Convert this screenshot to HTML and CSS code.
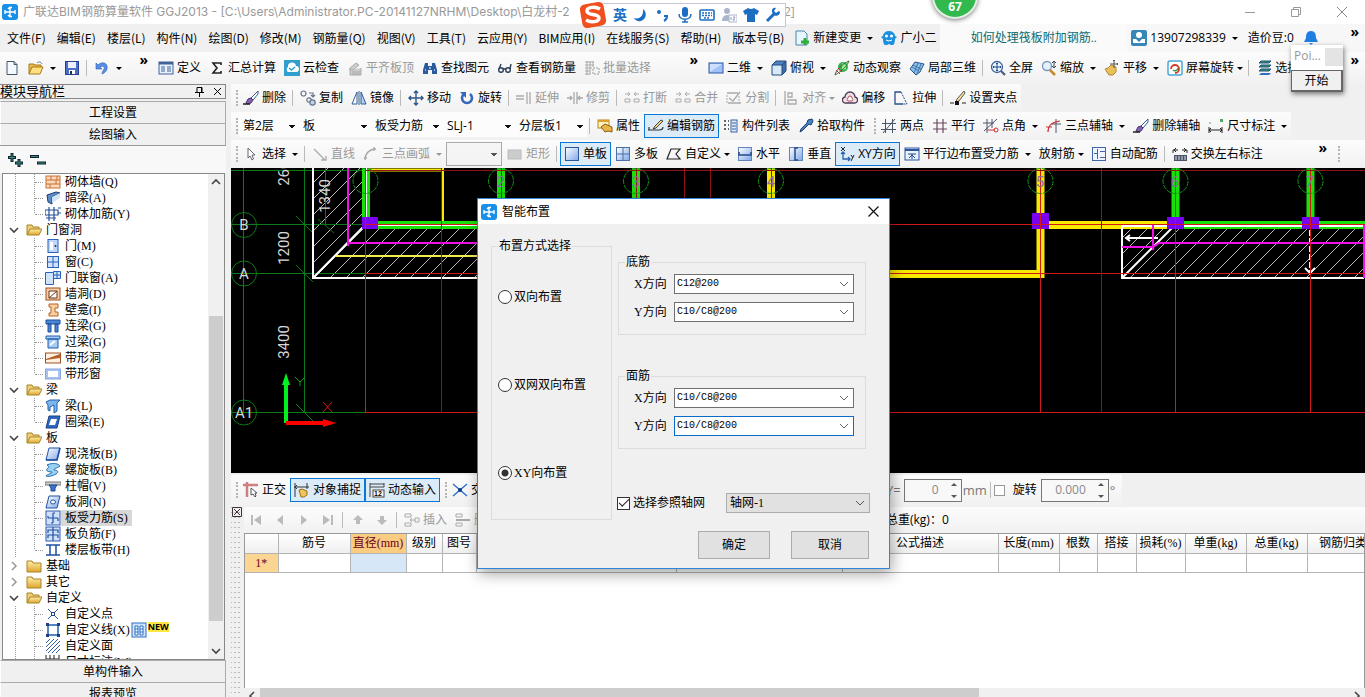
FILE: index.html
```html
<!DOCTYPE html>
<html lang="zh-CN">
<head>
  <meta charset="UTF-8" />
  <meta name="viewport" content="width=device-width, initial-scale=1" />
  <title>广联达BIM钢筋算量软件 GGJ2013</title>
  <link rel="stylesheet" href="styles.css">
</head>
<body>

<!-- icon sprite -->
<svg class="sprite" width="0" height="0">
  <defs>
    <linearGradient id="gBlue" x1="0" y1="0" x2="1" y2="1"><stop offset="0" stop-color="#fff"/><stop offset="1" stop-color="#7fa8e8"/></linearGradient>
    <linearGradient id="gGold" x1="0" y1="0" x2="0" y2="1"><stop offset="0" stop-color="#fff0a8"/><stop offset="1" stop-color="#dfa52c"/></linearGradient>
    <pattern id="hatch" width="16" height="16" patternUnits="userSpaceOnUse"><path d="M-1 17L17 -1" stroke="#bbb" stroke-width="1"/></pattern>
  </defs>
  <symbol id="i-app" viewBox="0 0 16 16"><rect width="16" height="16" rx="3" fill="#1a8fe8"/><path d="M10 3.500H8v9h2M3 8h10M3 6v4M13 6v4M6 5l2-2M6 11l2 2" stroke="#fff" stroke-width="1.400" fill="none"/></symbol>
  <symbol id="i-new" viewBox="0 0 16 16"><path d="M3 1.500h7l3 3v10H3z" fill="#f4f8ff" stroke="#456"/><path d="M10 1.500v3h3" fill="none" stroke="#456"/></symbol>
  <symbol id="i-open" viewBox="0 0 16 16"><path d="M1 14V4h5l1 1h6v2" fill="#e9b84a" stroke="#a87a1c"/><path d="M1 14l3-7h11l-3 7z" fill="#ffdf80" stroke="#a87a1c"/><path d="M9 3c2-2 4-1 5 1" stroke="#579" fill="none"/></symbol>
  <symbol id="i-save" viewBox="0 0 16 16"><rect x="1.500" y="1.500" width="13" height="13" fill="#4a6fc8" stroke="#283f8f"/><rect x="4" y="2" width="8" height="6" fill="#eef"/><rect x="5" y="10" width="6" height="4" fill="#fff"/><rect x="6" y="11" width="2" height="3" fill="#234"/></symbol>
  <symbol id="i-undo" viewBox="0 0 16 16"><path d="M2 3v6h6L6 7c3-2 5 0 4 2s-2 3-2 5c3-1 6-4 5-8S7 2 4 5z" fill="#5b8ee6" stroke="#2d5cb8" stroke-width=".6"/></symbol>
  <symbol id="i-define" viewBox="0 0 16 16"><rect x="1" y="2" width="14" height="12" fill="#eaf2ff" stroke="#3f6395"/><rect x="1" y="2" width="14" height="2.500" fill="#3f6395"/><path d="M3 7h4M3 9h4M3 11h4M9 7h4M9 9h4M9 11h4" stroke="#3f6395"/></symbol>
  <symbol id="i-sum" viewBox="0 0 16 16"><path d="M12 5V3H4l4 5-4 5h8v-2" fill="none" stroke="#222" stroke-width="1.600"/></symbol>
  <symbol id="i-cloud" viewBox="0 0 16 16"><rect width="16" height="16" fill="#2f9fd0"/><path d="M4 12a3 3 0 0 1 0-5 4 4 0 0 1 8-1 3 3 0 0 1 0 6z" fill="#fff"/><path d="M5 8l2.500 2L11 7" fill="none" stroke="#2f9fd0" stroke-width="1.500"/></symbol>
  <symbol id="i-align-top" viewBox="0 0 16 16"><path d="M2 9l7-6 3 2-6 5zM3 10v5h11V8M5 12h8M5 14h8" fill="#ccc" stroke="#aaa"/></symbol>
  <symbol id="i-find" viewBox="0 0 16 16"><path d="M3 3h3v3h4V3h3l2 7v4h-5v-4H6v4H1v-4z" fill="#285a9c"/><path d="M3 10h1M12 10h1M7 8h2" stroke="#bcdcff" stroke-width="1.500"/></symbol>
  <symbol id="i-glasses" viewBox="0 0 16 16"><g fill="none" stroke="#2b3f57" stroke-width="1.400"><circle cx="4" cy="10" r="2.300"/><circle cx="11" cy="10" r="2.300"/><path d="M6 9h3M2 9l2-5M13 9l1-5"/></g></symbol>
  <symbol id="i-batch" viewBox="0 0 16 16"><path d="M1 2h9M1 5h9M1 8h7M1 11h5M1 14h5M3 1v14M6 1v14M9 1v6" stroke="#aaa"/><path d="M9 8h6v6H9z" fill="none" stroke="#999" stroke-dasharray="2 1"/></symbol>
  <symbol id="i-rect" viewBox="0 0 16 16"><rect x="1" y="3" width="14" height="10" fill="#9fc0f8" stroke="#2e58a8"/><path d="M2 12V4h12z" fill="#cfe0ff"/></symbol>
  <symbol id="i-rect-off" viewBox="0 0 16 16"><rect x="1" y="4" width="13" height="9" fill="#ccc" stroke="#bbb"/></symbol>
  <symbol id="i-cube" viewBox="0 0 16 16"><path d="M1 5l4-4h10l-4 4z" fill="#4d82bf"/><path d="M1 5h10v10H1z" fill="#d7e8f9"/><path d="M11 5l4-4v10l-4 4z" fill="#3e6ea8"/><path d="M1 5h10v10H1zM1 5l4-4h10v10l-4 4M11 5l4-4" fill="none" stroke="#234b7c"/></symbol>
  <symbol id="i-orbit" viewBox="0 0 16 16"><circle cx="9" cy="7" r="5" fill="#37b24a"/><path d="M8 3l4 2v4l-4 1z" fill="#a3e6a0"/><path d="M1 15c1-5 6-10 14-14-2 5-7 10-14 14z" fill="none" stroke="#2b6e2f"/><path d="M2 10l4 4M4 8l4 4" stroke="#c33"/></symbol>
  <symbol id="i-local3d" viewBox="0 0 16 16"><path d="M1 9l5-7 9 2-4 8-4 3z" fill="#8ec0e6" stroke="#235a93"/><path d="M4 5l8 4M3 7l7 4M9 3L5 13M12 4L8 14" stroke="#235a93" stroke-width=".7"/></symbol>
  <symbol id="i-full" viewBox="0 0 16 16"><circle cx="7" cy="7" r="5.500" fill="#eaf4ff" stroke="#3a5f96" stroke-width="1.300"/><path d="M7 3v8M3 7h8M6 4l1-1 1 1M6 10l1 1 1-1M4 6L3 7l1 1M10 6l1 1-1 1" stroke="#1e4a8c" fill="none"/><path d="M11 11l4 4" stroke="#4a5b7a" stroke-width="2.200"/></symbol>
  <symbol id="i-zoom" viewBox="0 0 16 16"><circle cx="6" cy="6" r="4.500" fill="#e4f1ff" stroke="#7e97b8" stroke-width="1.300"/><path d="M9 10l5 5" stroke="#c9882e" stroke-width="2.500"/><path d="M13 1v7M11 3l2-2 2 2M11 6l2 2 2-2" stroke="#345" fill="none"/></symbol>
  <symbol id="i-hand" viewBox="0 0 16 16"><path d="M1 9l3-1 3-3 5 2v5l-3 3H5z" fill="#eac05a" stroke="#b3862a"/><path d="M10 0v8M6 4h8M9 1l1-1 1 1M13 3l1 1-1 1" stroke="#555" fill="none"/></symbol>
  <symbol id="i-spin" viewBox="0 0 16 16"><rect x="1" y="1" width="14" height="14" rx="2" fill="#fff" stroke="#48a8dc" stroke-width="1.500"/><path d="M4 9a4 4 0 1 1 4 4" fill="none" stroke="#d43a2c" stroke-width="1.800"/><path d="M11 8a3 3 0 0 1-5 2" fill="none" stroke="#3b9b3b" stroke-width="1.500"/></symbol>
  <symbol id="i-floors" viewBox="0 0 16 16"><path d="M3 3l2-2h10l-2 2zM3 7l2-2h10l-2 2zM3 11l2-2h10l-2 2z" fill="#3e9d4b" stroke="#1b4f8a"/><path d="M3 15l2-2h10l-2 2z" fill="#2f6fc0"/></symbol>

  <symbol id="i-brush" viewBox="0 0 16 16"><path d="M15 1L8 8l2 2 5-6z" fill="#fff" stroke="#345c94"/><path d="M8 8l2 2-2 3-4 1-1-1 2-4z" fill="#8a62b5" stroke="#43306b"/><path d="M0 14h7" stroke="#222" stroke-width="1.500"/></symbol>
  <symbol id="i-copy" viewBox="0 0 16 16"><g fill="none" stroke="#66758c" stroke-width="1.200"><circle cx="3.500" cy="3.500" r="2.500"/><circle cx="9" cy="10" r="2.200"/><circle cx="12.500" cy="12.500" r="2.700" fill="#bcd3ee"/><path d="M9 3h4v4M11 5l2 2 2-2"/></g></symbol>
  <symbol id="i-mirror" viewBox="0 0 16 16"><path d="M6 2v12H1z" fill="#fff" stroke="#2f5c96"/><path d="M10 2v12h5z" fill="#b6d1f0" stroke="#2f5c96"/><path d="M8 1v14" stroke="#2f5c96"/></symbol>
  <symbol id="i-move" viewBox="0 0 16 16"><path d="M8 1v14M1 8h14M6 3l2-2 2 2M6 13l2 2 2-2M3 6L1 8l2 2M13 6l2 2-2 2" fill="none" stroke="#2f5687" stroke-width="1.400"/></symbol>
  <symbol id="i-rotate" viewBox="0 0 16 16"><path d="M5 4a5 5 0 1 0 6 0" fill="none" stroke="#3568b8" stroke-width="2.600"/><path d="M1 2h6v6z" fill="#3568b8"/></symbol>
  <symbol id="i-extend" viewBox="0 0 16 16"><path d="M0 6h8M0 9h8M11 2v12M14 2v12" stroke="#aaa" stroke-width="1.300"/></symbol>
  <symbol id="i-trim" viewBox="0 0 16 16"><path d="M0 8h5M11 8h5M7 2v12M10 2v12M3 6l2 2-2 2M13 6l-2 2 2 2" fill="none" stroke="#aaa" stroke-width="1.300"/></symbol>
  <symbol id="i-break" viewBox="0 0 16 16"><path d="M1 4h5M10 4h5M4 2l2 2-2 2M12 2l-2 2 2 2M1 9h5v3H1zM10 9h5v3h-5z" fill="none" stroke="#aaa"/></symbol>
  <symbol id="i-split" viewBox="0 0 16 16"><path d="M1 3h11M2 13h13M3 8l4 3 7-9" fill="none" stroke="#aaa" stroke-width="1.300"/><path d="M1 5v8M13 6v7" stroke="#aaa" stroke-dasharray="2 1"/></symbol>
  <symbol id="i-align" viewBox="0 0 16 16"><path d="M2 1v14M5 3h4v4H5zM5 10h8v4H5z" fill="none" stroke="#aaa" stroke-width="1.300"/></symbol>
  <symbol id="i-offset" viewBox="0 0 16 16"><path d="M4 13a3 3 0 0 1-1-6 5 5 0 0 1 10 0 3 3 0 0 1-1 6z" fill="#f1dfe3" stroke="#4a3d5a" stroke-width="1.300"/><path d="M6 11a2 2 0 0 1 0-3 2 2 0 0 1 4 0 2 2 0 0 1 0 3z" fill="#fff" stroke="#b44a5c"/></symbol>
  <symbol id="i-stretch" viewBox="0 0 16 16"><path d="M8 2H2v12h8" fill="none" stroke="#2b4f8d" stroke-width="1.300"/><path d="M8 2l6 12h-4" fill="none" stroke="#2b4f8d" stroke-dasharray="2 1"/></symbol>
  <symbol id="i-grip-pt" viewBox="0 0 16 16"><path d="M0 13h4M12 13h4" stroke="#222"/><path d="M14 1L7 9l-1 3 3-1 6-8z" fill="#f6e2a0" stroke="#555"/><rect x="5" y="11" width="4" height="4" fill="#111"/></symbol>

  <symbol id="i-prop" viewBox="0 0 16 16"><rect x="1" y="2" width="11" height="8" fill="#fff3c4" stroke="#b98519"/><path d="M1 3h11" stroke="#d9a02c" stroke-width="2"/><path d="M4 9l4-3 7 3v5l-4-1-3 1z" fill="#e9b548" stroke="#8a5c10"/></symbol>
  <symbol id="i-editbar" viewBox="0 0 16 16"><path d="M0 12h11c3 0 4-1 4-3M1 9v3" fill="none" stroke="#333" stroke-width="1.200"/><path d="M13 2L7 8l-2 3 3-1 7-7z" fill="#f4d58a" stroke="#444"/></symbol>
  <symbol id="i-list" viewBox="0 0 16 16"><path d="M1 3h2M1 7h2M1 11h2M5 3h1M5 7h1M5 11h1" stroke="#333" stroke-width="1.500"/><rect x="8" y="2" width="6" height="12" fill="#dfeaff" stroke="#3d629e"/><path d="M9 5h4M9 8h4M9 11h4" stroke="#3d629e"/></symbol>
  <symbol id="i-pick" viewBox="0 0 16 16"><path d="M10 2l4-1 1 2-2 4-2-1-6 6-3 2 1-3 6-6z" fill="#4a85c8" stroke="#173d73"/></symbol>
  <symbol id="i-ax2" viewBox="0 0 16 16"><path d="M4.500 1v14M11.500 1v14M0 11.500h15M1 5.500h14M2 15L14 1" stroke="#465567"/></symbol>
  <symbol id="i-axpar" viewBox="0 0 16 16"><path d="M5 1v14M11 1v14M1 5h14M1 11h14" stroke="#6c4a63" stroke-width="1.200"/></symbol>
  <symbol id="i-axang" viewBox="0 0 16 16"><path d="M4 1v14M9 1v9M0 5h11M1 13L14 1" stroke="#4c5770"/><path d="M4 12h8" stroke="#c33"/><circle cx="13" cy="12" r="2" fill="none" stroke="#c33"/></symbol>
  <symbol id="i-ax3" viewBox="0 0 16 16"><path d="M10 1v14M6 6h9" stroke="#4c5770"/><path d="M2 14c0-6 3-10 12-11M0 9h6" fill="none" stroke="#c33" stroke-width="1.200"/></symbol>
  <symbol id="i-dim" viewBox="0 0 16 16"><path d="M1 9v6M14 9v6M1 12h13M3 10l-2 2 2 2M12 10l2 2-2 2" fill="none" stroke="#222"/><path d="M12 1h3v3h-3z" fill="#53a866"/><path d="M1 5h2" stroke="#53a866"/></symbol>

  <symbol id="i-cursor" viewBox="0 0 16 16"><path d="M5 2v10l2-2 2 4 1.500-1L9 9h3z" fill="#fff" stroke="#667"/></symbol>
  <symbol id="i-line" viewBox="0 0 16 16"><path d="M2 3l11 11M9 14h5v-4" fill="none" stroke="#aaa" stroke-width="1.300"/></symbol>
  <symbol id="i-arc" viewBox="0 0 16 16"><path d="M2 14C2 7 7 3 13 3" fill="none" stroke="#aaa" stroke-width="1.500"/><path d="M1 12h3M11 1v4" stroke="#aaa" stroke-width="1.300"/></symbol>
  <symbol id="i-slab" viewBox="0 0 16 16"><rect x="1.500" y="1.500" width="13" height="13" fill="url(#gBlue)" stroke="#2c559c"/></symbol>
  <symbol id="i-slabs" viewBox="0 0 16 16"><rect x="1.500" y="1.500" width="13" height="13" fill="url(#gBlue)" stroke="#4b6fa8"/><path d="M8 1v14M1 8h14" stroke="#4b6fa8"/></symbol>
  <symbol id="i-poly" viewBox="0 0 16 16"><path d="M5 3h9l-4 5 4 5H1z" fill="none" stroke="#222" stroke-width="1.200"/></symbol>
  <symbol id="i-horiz" viewBox="0 0 16 16"><rect x="1.500" y="1.500" width="13" height="13" fill="url(#gBlue)" stroke="#6384b8"/><path d="M2 6v3h12V6" fill="none" stroke="#24498a" stroke-width="1.500"/></symbol>
  <symbol id="i-vert" viewBox="0 0 16 16"><rect x="1.500" y="1.500" width="13" height="13" fill="url(#gBlue)" stroke="#6384b8"/><path d="M10 2H7v12h3" fill="none" stroke="#24498a" stroke-width="1.500"/></symbol>
  <symbol id="i-xy" viewBox="0 0 16 16"><path d="M4 6v7h7M2 8l2-2 2 2M9 11l2 2-2 2" fill="none" stroke="#2b62a8" stroke-width="1.300"/><path d="M2 1l4 4M6 1L2 5M12 9l2 3M15 9l-3 6" stroke="#222"/></symbol>
  <symbol id="i-edge" viewBox="0 0 16 16"><rect x="1" y="2" width="14" height="12" fill="#e8f1ff" stroke="#2c559c"/><path d="M1 4h14" stroke="#2c559c" stroke-width="2"/><path d="M4 8h8M8 8v5M5 12l3-3 3 3" fill="none" stroke="#24498a"/></symbol>
  <symbol id="i-auto" viewBox="0 0 16 16"><rect x="1.500" y="1.500" width="13" height="13" fill="#f0f5ff" stroke="#4065a8"/><path d="M6.500 3v10M3 7.500h4M9 5.500h5M9 11.500h5" stroke="#4065a8"/></symbol>
  <symbol id="i-swap" viewBox="0 0 16 16"><rect x="2" y="9" width="13" height="6" fill="#4a5568"/><path d="M4 10v4M7 10v4M10 10v4M13 10v4" stroke="#dde"/><path d="M1 7V4h5M15 7V4h-5M4 2L2 4l2 2M12 2l2 2-2 2" stroke="#222" fill="none"/></symbol>

  <symbol id="i-ortho" viewBox="0 0 16 16"><path d="M0 3h15M4 0v15" stroke="#cf7f7f" stroke-width="2.500"/><path d="M8 6v7l2-1 2 3 1-1-1-3h2z" fill="#fff" stroke="#556"/></symbol>
  <symbol id="i-snap" viewBox="0 0 16 16"><path d="M1 1v14M0 5h15M13 1v6M3 3L1 5l2 2" stroke="#333" fill="none"/><path d="M5 8l3-1 5 2v4l-3 2H7z" fill="#f2c55a" stroke="#9a6d17"/></symbol>
  <symbol id="i-dyn" viewBox="0 0 16 16"><path d="M1 1v14M15 1v4M1 2h14M1 5h14" stroke="#444"/><rect x="4" y="8" width="11" height="7" fill="#fff" stroke="#444"/><text x="5" y="14" font-size="7" font-weight="bold" font-family="Liberation Sans">12</text></symbol>
  <symbol id="i-cross" viewBox="0 0 16 16"><path d="M1 2l14 12M15 2L1 14" stroke="#2a6ad0" stroke-width="1.300"/><circle cx="8" cy="8" r="2" fill="#123a7c"/></symbol>
  <symbol id="i-first" viewBox="0 0 16 16"><path d="M4 3v10" stroke="#bbb" stroke-width="2"/><path d="M13 3v10L6 8z" fill="#bbb"/></symbol>
  <symbol id="i-prev" viewBox="0 0 16 16"><path d="M11 3v10L5 8z" fill="#bbb"/></symbol>
  <symbol id="i-next" viewBox="0 0 16 16"><path d="M5 3v10l6-5z" fill="#bbb"/></symbol>
  <symbol id="i-last" viewBox="0 0 16 16"><path d="M12 3v10" stroke="#bbb" stroke-width="2"/><path d="M3 3v10l7-5z" fill="#bbb"/></symbol>
  <symbol id="i-up" viewBox="0 0 16 16"><path d="M8 3l5 5h-3v4H6V8H3z" fill="#bbb"/></symbol>
  <symbol id="i-down" viewBox="0 0 16 16"><path d="M8 13l5-5h-3V4H6v4H3z" fill="#bbb"/></symbol>
  <symbol id="i-ins" viewBox="0 0 16 16"><path d="M1 2h6v3H1zM1 11h6v3H1zM11 6h4v4h-4zM11 8H6M8 6L6 8l2 2" fill="none" stroke="#aaa"/></symbol>
  <symbol id="i-del" viewBox="0 0 16 16"><path d="M1 2h6v3H1zM1 11h6v3H1z" fill="none" stroke="#aaa"/><path d="M1 8h14" stroke="#aaa" stroke-width="2"/></symbol>

  <symbol id="i-doc-add" viewBox="0 0 16 16"><path d="M2 1h8l3 3v11H2z" fill="#eaf6ff" stroke="#4b86a8"/><path d="M11 8v7M7 12h8" stroke="#2eae3a" stroke-width="3"/></symbol>
  <symbol id="i-mascot" viewBox="0 0 16 16"><path d="M2 6a6 5 0 0 1 12 0l2 1-2 2c0 3-1 6-2 6h-2l-2-1-2 1H4c-1 0-2-3-2-6L0 7z" fill="#1b8fe0"/><circle cx="5.500" cy="6" r="1.500" fill="#fff"/><circle cx="10.500" cy="6" r="1.500" fill="#fff"/><path d="M5 10q3 2 6 0" stroke="#fff" fill="none"/></symbol>
  <symbol id="i-user" viewBox="0 0 16 16"><rect width="16" height="16" rx="2" fill="#3886b8"/><circle cx="8" cy="5" r="3" fill="#fff"/><path d="M2 13V9h3l3 3 3-3h3v4z" fill="#fff"/></symbol>
  <symbol id="i-bell" viewBox="0 0 16 16"><path d="M8 1c4 0 5 3 5 7l2 4H1l2-4c0-4 1-7 5-7z" fill="#1e7fe0"/><path d="M6 13h4l-2 2z" fill="#1e7fe0"/></symbol>

  <symbol id="t-folder" viewBox="0 0 16 16"><path d="M1 3h5l1 2h8v9H1z" fill="url(#gGold)" stroke="#a8842c"/></symbol>
  <symbol id="t-folder-open" viewBox="0 0 16 16"><path d="M1 13V3h5l1 2h6v2" fill="#f0cc70" stroke="#a8842c"/><path d="M1 13l3-6h12l-3 6z" fill="url(#gGold)" stroke="#a8842c"/></symbol>
  <symbol id="t-open" viewBox="0 0 12 12"><path d="M2 4l4 4 4-4" fill="none" stroke="#444" stroke-width="1.600"/></symbol>
  <symbol id="t-shut" viewBox="0 0 12 12"><path d="M4 2l4 4-4 4" fill="none" stroke="#999" stroke-width="1.500"/></symbol>
  <symbol id="t-brick" viewBox="0 0 16 16"><rect x="1" y="2" width="14" height="12" fill="#fbd9b8" stroke="#c86f35"/><path d="M1 6h14M1 10h14M6 2v4M11 6v4M5 10v4M12 2v4" stroke="#c86f35"/></symbol>
  <symbol id="t-beam" viewBox="0 0 16 16"><path d="M2 5l9-3 4 1-8 4v7l-4-2z" fill="#5b8cc6" stroke="#1d3f75"/><path d="M7 7l8-4v5l-8 5z" fill="#cfe2f8"/></symbol>
  <symbol id="t-rebar" viewBox="0 0 16 16"><path d="M0 4h13v5H0zM4 1v14M9 1v14M1 12h10M13 2h3M13 7h3" fill="none" stroke="#22509a" stroke-width="1.200"/></symbol>
  <symbol id="t-door" viewBox="0 0 16 16"><rect x="3" y="1.500" width="10" height="13" fill="#bcd6ff" stroke="#2962b8"/><path d="M5 4h3v8H5z" fill="#fff"/><circle cx="10.500" cy="8" r="1" fill="#234"/></symbol>
  <symbol id="t-window" viewBox="0 0 16 16"><rect x="2.500" y="2.500" width="11" height="11" fill="#cfe3ff" stroke="#2962b8"/><path d="M8 3v10M3 8h10" stroke="#2962b8"/></symbol>
  <symbol id="t-doorwin" viewBox="0 0 16 16"><path d="M.5 2.500h8v12h-8zM8.500 1.500h7v7h-7z" fill="#cfe3ff" stroke="#2962b8"/><path d="M12 2v6M9 5h6" stroke="#2962b8"/></symbol>
  <symbol id="t-hole" viewBox="0 0 16 16"><rect x="1" y="2" width="14" height="12" fill="#f7cfa8" stroke="#a04f20"/><path d="M4 5h8v7H4z" fill="#fff" stroke="#6d3517"/><path d="M4 12l8-7" stroke="#6d3517"/></symbol>
  <symbol id="t-niche" viewBox="0 0 16 16"><path d="M4 2h9v4h-3v4h3v4H4v-3h2V5H4z" fill="#fbd0a0" stroke="#b8602a"/></symbol>
  <symbol id="t-lianliang" viewBox="0 0 16 16"><path d="M1 2h14v4H1zM3 6h3v8H3zM10 6h3v8h-3z" fill="#4a86d6" stroke="#1f4f98"/></symbol>
  <symbol id="t-guoliang" viewBox="0 0 16 16"><path d="M1 2h14v3H1zM3 5h10v9H3z" fill="#a7cbf5" stroke="#1f5fae"/><path d="M5 11l5-4" stroke="#fff" stroke-width="2"/></symbol>
  <symbol id="t-strip" viewBox="0 0 16 16"><rect x=".5" y="3" width="15" height="10" fill="#fff2e2" stroke="#a04f20"/><path d="M1 9l14-5v4L1 10z" fill="#b8602a"/></symbol>
  <symbol id="t-stripwin" viewBox="0 0 16 16"><rect x=".5" y="3" width="15" height="10" fill="#a9c2f2" stroke="#87a4dc"/><rect x="3" y="5" width="10" height="6" fill="#fff"/></symbol>
  <symbol id="t-liang" viewBox="0 0 16 16"><path d="M1 4l4-2h10l-3 3v8l-3 2V7L5 9v4l-2-1V7z" fill="#7ab5ee" stroke="#1f5fae"/></symbol>
  <symbol id="t-quan" viewBox="0 0 16 16"><path d="M4 2h11l-3 12H1z" fill="#2e68c2" stroke="#173d84"/><path d="M6 5h6l-2 6H4z" fill="#fff"/></symbol>
  <symbol id="t-slab" viewBox="0 0 16 16"><path d="M4 2h11l-3 12H1z" fill="url(#gBlue)" stroke="#1f50a4"/><path d="M1 14h11l3-12" fill="none" stroke="#1f50a4" stroke-width="1.600"/></symbol>
  <symbol id="t-spiral" viewBox="0 0 16 16"><path d="M2 3c6-3 12-1 13 1-2 2-6 2-6 4 4 0 5 2 2 4s-8 3-10 2c1-2 6-2 6-4-5 0-7-2-4-4 1-1 1-2-1-3z" fill="#9bd0f5" stroke="#1f6fb4"/></symbol>
  <symbol id="t-cap" viewBox="0 0 16 16"><path d="M0 4h16v3H0z" fill="#ccc" stroke="#777"/><path d="M4 7h8l-2 3v3H6v-3z" fill="#3a74cc" stroke="#1d4a94"/></symbol>
  <symbol id="t-slabhole" viewBox="0 0 16 16"><path d="M4 2h11l-3 12H1z" fill="url(#gBlue)" stroke="#1f50a4"/><ellipse cx="8" cy="8" rx="2.500" ry="2" fill="#fff" stroke="#1f50a4"/></symbol>
  <symbol id="t-force" viewBox="0 0 16 16"><rect x="1" y="1" width="14" height="14" fill="#cfe0fb" stroke="#2f5fae"/><path d="M8 3v10M3 8h10M3 8V6M13 8v3M8 3h2M8 13H6" fill="none" stroke="#1f50a4" stroke-width="1.200"/></symbol>
  <symbol id="t-neg" viewBox="0 0 16 16"><rect x="1" y="1" width="14" height="14" fill="#cfe0fb" stroke="#2f5fae"/><path d="M3 7V4h10v3M3 12V9h10v3M8 1v14" fill="none" stroke="#1f50a4" stroke-width="1.200"/></symbol>
  <symbol id="t-band" viewBox="0 0 16 16"><path d="M1 3h14M1 13h14M5 3v10M11 3v10" stroke="#1f50a4" stroke-width="1.500"/></symbol>
  <symbol id="t-pt" viewBox="0 0 16 16"><path d="M3 3l10 10M13 3L3 13" stroke="#2f5fae"/><rect x="6.500" y="6.500" width="3" height="3" fill="#fff" stroke="#1f3f84"/></symbol>
  <symbol id="t-ln" viewBox="0 0 16 16"><rect x="3" y="3" width="10" height="10" fill="none" stroke="#1f5fae" stroke-width="1.500"/><path d="M1 1h3v3H1zM12 1h3v3h-3zM1 12h3v3H1zM12 12h3v3h-3z" fill="#1f3f84"/></symbol>
  <symbol id="t-face" viewBox="0 0 16 16"><path d="M1 5l4-4M1 9l8-8M1 13L13 1M3 15L15 3M7 15l8-8M11 15l4-4" stroke="#2f5fae"/></symbol>
  <symbol id="t-ruler" viewBox="0 0 16 16"><path d="M1 1v14M5 1v5M9 1v5M14 1v14M1 5h13" stroke="#222"/></symbol>
  <symbol id="t-book" viewBox="0 0 16 16"><rect x="1" y="1" width="14" height="14" fill="#cfe6ff" stroke="#2f6fc0"/><path d="M4 4h3v9H4zM9 4h3v9H9zM4 7h3M4 10h3M9 7h3M9 10h3" fill="#fff" stroke="#2f6fc0"/></symbol>
</svg>

<header class="titlebar">
  <svg class="ico"><use href="#i-app"/></svg>
  <span class="title-text">广联达BIM钢筋算量软件 GGJ2013 - [C:\Users\Administrator.PC-20141127NRHM\Desktop\白龙村-2</span>
  <span>2]</span>
  <div class="win-btns">
    <button aria-label="最小化"><svg width="10" height="10"><path d="M0 5.500h10" stroke="#999"/></svg></button>
    <button aria-label="还原"><svg width="10" height="10"><path d="M.5 2.500h7v7h-7zM2.500 2V.5h7v7H8" fill="none" stroke="#999"/></svg></button>
    <button aria-label="关闭"><svg width="10" height="10"><path d="M0 0l10 10M10 0L0 10" stroke="#888"/></svg></button>
  </div>
</header>

<nav class="menubar">
  <div class="menus"><button>文件(F)</button><button>编辑(E)</button><button>楼层(L)</button><button>构件(N)</button><button>绘图(D)</button><button>修改(M)</button><button>钢筋量(Q)</button><button>视图(V)</button><button>工具(T)</button><button>云应用(Y)</button><button>BIM应用(I)</button><button>在线服务(S)</button><button>帮助(H)</button><button>版本号(B)</button></div>
  <button class="tool"><svg class="ico"><use href="#i-doc-add"/></svg>新建变更<i class="caret wide"></i></button>
  <button class="tool"><svg class="ico"><use href="#i-mascot"/></svg>广小二</button>
  <div class="news"><a href="#">如何处理筏板附加钢筋..</a></div>
  <div class="account">
    <button class="tool"><svg class="ico"><use href="#i-user"/></svg>13907298339<i class="caret wide"></i></button>
    <span>造价豆:0</span>
    <svg class="ico bell"><use href="#i-bell"/></svg>
    <button class="more">»</button>
  </div>
</nav>

<div class="topbar">
  <div class="toolbar file-tools">
    <button class="tool" aria-label="新建"><svg class="ico"><use href="#i-new"/></svg></button>
    <button class="tool" aria-label="打开"><svg class="ico"><use href="#i-open"/></svg><i class="caret wide"></i></button>
    <button class="tool" aria-label="保存"><svg class="ico"><use href="#i-save"/></svg></button>
    <i class="sep"></i>
    <button class="tool" aria-label="撤销"><svg class="ico"><use href="#i-undo"/></svg><i class="caret wide"></i></button>
    <button class="more">»</button>
  </div>
  <div class="toolbar calc-tools">
    <button class="tool"><svg class="ico"><use href="#i-define"/></svg>定义</button>
    <button class="tool"><svg class="ico"><use href="#i-sum"/></svg>汇总计算</button>
    <button class="tool"><svg class="ico"><use href="#i-cloud"/></svg>云检查</button>
    <button class="tool" disabled><svg class="ico"><use href="#i-align-top"/></svg>平齐板顶</button>
    <button class="tool"><svg class="ico"><use href="#i-find"/></svg>查找图元</button>
    <button class="tool"><svg class="ico"><use href="#i-glasses"/></svg>查看钢筋量</button>
    <button class="tool" disabled><svg class="ico"><use href="#i-batch"/></svg>批量选择</button>
    <button class="more">»</button>
  </div>
  <div class="toolbar view-tools">
    <button class="tool"><svg class="ico"><use href="#i-rect"/></svg>二维<i class="caret wide"></i></button>
    <button class="tool"><svg class="ico"><use href="#i-cube"/></svg>俯视<i class="caret wide"></i></button>
    <button class="tool"><svg class="ico"><use href="#i-orbit"/></svg>动态观察</button>
    <button class="tool"><svg class="ico"><use href="#i-local3d"/></svg>局部三维</button>
    <i class="sep"></i>
    <button class="tool"><svg class="ico"><use href="#i-full"/></svg>全屏</button>
    <button class="tool"><svg class="ico"><use href="#i-zoom"/></svg>缩放<i class="caret wide"></i></button>
    <button class="tool"><svg class="ico"><use href="#i-hand"/></svg>平移<i class="caret wide"></i></button>
    <button class="tool"><svg class="ico"><use href="#i-spin"/></svg>屏幕旋转<i class="caret"></i></button>
    <i class="sep"></i>
    <button class="tool"><svg class="ico"><use href="#i-floors"/></svg>选择楼层</button>
    <button class="more">»</button>
  </div>
</div>

<div class="main">
  <aside class="nav">
    <div class="nav-head">模块导航栏
      <span class="nav-head-btns">
        <svg width="9" height="11"><path d="M2 1.500h5v5H2zM0 6.500h9M4.500 7v4M6.500 1v5" fill="none" stroke="#000"/></svg>
        <svg width="9" height="9"><path d="M1 1l7 7M8 1L1 8" stroke="#000"/></svg>
      </span>
    </div>
    <button class="nav-tab">工程设置</button>
    <button class="nav-tab">绘图输入</button>
    <div class="nav-tools">
      <svg width="16" height="16"><path d="M5 1v9M1 5.500h8M12 7v8M8 11h8" stroke="#123" stroke-width="3"/><path d="M5 2v7M2 5.500h6M12 8v6M9 11h6" stroke="#3a8a76"/></svg>
      <svg width="16" height="16"><path d="M0 4.500h9M7 11h9" stroke="#123" stroke-width="3"/><path d="M1 4.500h7M8 11h7" stroke="#3a8a76"/></svg>
    </div>
    <div class="tree-box">
      <div class="tree">
        <ul>
          <li><svg class="ico"><use href="#t-brick"/></svg>砌体墙(Q)</li>
          <li><svg class="ico"><use href="#t-beam"/></svg>暗梁(A)</li>
          <li><svg class="ico"><use href="#t-rebar"/></svg>砌体加筋(Y)</li>
        </ul>
        <div class="group"><svg class="chev"><use href="#t-open"/></svg><svg class="ico"><use href="#t-folder-open"/></svg>门窗洞</div>
        <ul>
          <li><svg class="ico"><use href="#t-door"/></svg>门(M)</li>
          <li><svg class="ico"><use href="#t-window"/></svg>窗(C)</li>
          <li><svg class="ico"><use href="#t-doorwin"/></svg>门联窗(A)</li>
          <li><svg class="ico"><use href="#t-hole"/></svg>墙洞(D)</li>
          <li><svg class="ico"><use href="#t-niche"/></svg>壁龛(I)</li>
          <li><svg class="ico"><use href="#t-lianliang"/></svg>连梁(G)</li>
          <li><svg class="ico"><use href="#t-guoliang"/></svg>过梁(G)</li>
          <li><svg class="ico"><use href="#t-strip"/></svg>带形洞</li>
          <li><svg class="ico"><use href="#t-stripwin"/></svg>带形窗</li>
        </ul>
        <div class="group"><svg class="chev"><use href="#t-open"/></svg><svg class="ico"><use href="#t-folder-open"/></svg>梁</div>
        <ul>
          <li><svg class="ico"><use href="#t-liang"/></svg>梁(L)</li>
          <li><svg class="ico"><use href="#t-quan"/></svg>圈梁(E)</li>
        </ul>
        <div class="group"><svg class="chev"><use href="#t-open"/></svg><svg class="ico"><use href="#t-folder-open"/></svg>板</div>
        <ul>
          <li><svg class="ico"><use href="#t-slab"/></svg>现浇板(B)</li>
          <li><svg class="ico"><use href="#t-spiral"/></svg>螺旋板(B)</li>
          <li><svg class="ico"><use href="#t-cap"/></svg>柱帽(V)</li>
          <li><svg class="ico"><use href="#t-slabhole"/></svg>板洞(N)</li>
          <li class="on"><svg class="ico"><use href="#t-force"/></svg><span>板受力筋(S)</span></li>
          <li><svg class="ico"><use href="#t-neg"/></svg>板负筋(F)</li>
          <li><svg class="ico"><use href="#t-band"/></svg>楼层板带(H)</li>
        </ul>
        <div class="group"><svg class="chev"><use href="#t-shut"/></svg><svg class="ico"><use href="#t-folder"/></svg>基础</div>
        <div class="group"><svg class="chev"><use href="#t-shut"/></svg><svg class="ico"><use href="#t-folder"/></svg>其它</div>
        <div class="group"><svg class="chev"><use href="#t-open"/></svg><svg class="ico"><use href="#t-folder-open"/></svg>自定义</div>
        <ul>
          <li><svg class="ico"><use href="#t-pt"/></svg>自定义点</li>
          <li><svg class="ico"><use href="#t-ln"/></svg>自定义线(X)<svg class="ico tight"><use href="#t-book"/></svg><b class="new">NEW</b></li>
          <li><svg class="ico"><use href="#t-face"/></svg>自定义面</li>
          <li><svg class="ico"><use href="#t-ruler"/></svg>尺寸标注(W)</li>
        </ul>
      </div>
      <div class="vscroll">
        <svg width="10" height="16"><path d="M1 10l4-4 4 4" fill="none" stroke="#444" stroke-width="1.600"/></svg>
        <i class="thumb"></i>
        <svg width="10" height="16"><path d="M1 6l4 4 4-4" fill="none" stroke="#444" stroke-width="1.600"/></svg>
      </div>
    </div>
    <button class="nav-tab">单构件输入</button>
    <button class="nav-tab">报表预览</button>
  </aside>

  <section class="work">
    <div class="toolbar">
      <i class="grip"></i>
      <button class="tool"><svg class="ico"><use href="#i-brush"/></svg>删除</button>
      <i class="sep"></i>
      <button class="tool"><svg class="ico"><use href="#i-copy"/></svg>复制</button>
      <button class="tool"><svg class="ico"><use href="#i-mirror"/></svg>镜像</button>
      <i class="sep"></i>
      <button class="tool"><svg class="ico"><use href="#i-move"/></svg>移动</button>
      <button class="tool"><svg class="ico"><use href="#i-rotate"/></svg>旋转</button>
      <i class="sep"></i>
      <button class="tool" disabled><svg class="ico"><use href="#i-extend"/></svg>延伸</button>
      <button class="tool" disabled><svg class="ico"><use href="#i-trim"/></svg>修剪</button>
      <i class="sep"></i>
      <button class="tool" disabled><svg class="ico"><use href="#i-break"/></svg>打断</button>
      <button class="tool" disabled><svg class="ico"><use href="#i-break"/></svg>合并</button>
      <button class="tool" disabled><svg class="ico"><use href="#i-split"/></svg>分割</button>
      <i class="sep"></i>
      <button class="tool" disabled><svg class="ico"><use href="#i-align"/></svg>对齐<i class="caret"></i></button>
      <button class="tool"><svg class="ico"><use href="#i-offset"/></svg>偏移</button>
      <button class="tool"><svg class="ico"><use href="#i-stretch"/></svg>拉伸</button>
      <i class="sep"></i>
      <button class="tool"><svg class="ico"><use href="#i-grip-pt"/></svg>设置夹点</button>
    </div>
    <div class="toolbar">
      <i class="grip"></i>
      <select class="pick short" aria-label="楼层"><option>第2层</option></select>
      <select class="pick" aria-label="构件类型"><option>板</option></select>
      <select class="pick" aria-label="构件"><option>板受力筋</option></select>
      <select class="pick" aria-label="名称"><option>SLJ-1</option></select>
      <select class="pick" aria-label="分层"><option>分层板1</option></select>
      <i class="sep"></i>
      <button class="tool"><svg class="ico"><use href="#i-prop"/></svg>属性</button>
      <button class="tool on"><svg class="ico"><use href="#i-editbar"/></svg>编辑钢筋</button>
      <button class="tool"><svg class="ico"><use href="#i-list"/></svg>构件列表</button>
      <button class="tool"><svg class="ico"><use href="#i-pick"/></svg>拾取构件</button>
      <i class="grip"></i>
      <button class="tool"><svg class="ico"><use href="#i-ax2"/></svg>两点</button>
      <button class="tool"><svg class="ico"><use href="#i-axpar"/></svg>平行</button>
      <button class="tool"><svg class="ico"><use href="#i-axang"/></svg>点角<i class="caret wide"></i></button>
      <button class="tool"><svg class="ico"><use href="#i-ax3"/></svg>三点辅轴<i class="caret wide"></i></button>
      <button class="tool"><svg class="ico"><use href="#i-brush"/></svg>删除辅轴</button>
      <button class="tool"><svg class="ico"><use href="#i-dim"/></svg>尺寸标注<i class="caret wide"></i></button>
    </div>
    <div class="toolbar full">
      <i class="grip"></i>
      <button class="tool"><svg class="ico"><use href="#i-cursor"/></svg>选择<i class="caret wide"></i></button>
      <i class="sep"></i>
      <button class="tool" disabled><svg class="ico"><use href="#i-line"/></svg>直线</button>
      <button class="tool" disabled><svg class="ico"><use href="#i-arc"/></svg>三点画弧<i class="caret wide"></i></button>
      <select class="pick boxed" aria-label="画弧方式" disabled><option></option></select>
      <button class="tool" disabled><svg class="ico"><use href="#i-rect-off"/></svg>矩形</button>
      <i class="sep"></i>
      <button class="tool on"><svg class="ico"><use href="#i-slab"/></svg>单板</button>
      <button class="tool"><svg class="ico"><use href="#i-slabs"/></svg>多板</button>
      <button class="tool"><svg class="ico"><use href="#i-poly"/></svg>自定义<i class="caret"></i></button>
      <button class="tool"><svg class="ico"><use href="#i-horiz"/></svg>水平</button>
      <button class="tool"><svg class="ico"><use href="#i-vert"/></svg>垂直</button>
      <button class="tool on"><svg class="ico"><use href="#i-xy"/></svg>XY方向</button>
      <button class="tool"><svg class="ico"><use href="#i-edge"/></svg>平行边布置受力筋<i class="caret wide"></i></button>
      <button class="tool">放射筋<i class="caret"></i></button>
      <button class="tool"><svg class="ico"><use href="#i-auto"/></svg>自动配筋</button>
      <i class="sep"></i>
      <button class="tool"><svg class="ico"><use href="#i-swap"/></svg>交换左右标注</button>
      <button class="more">»</button>
      <i class="grip"></i>
    </div>

    <!-- drawing area -->
    <svg class="canvas" viewBox="231 168 1134 305" preserveAspectRatio="xMinYMin slice">
      <rect x="231" y="168" width="3000" height="2000" fill="#000"/>
      <!-- hatched slabs -->
      <path d="M313 168h49v57h116v53H313z" fill="url(#hatch)"/>
      <rect x="1122" y="226" width="242" height="52" fill="url(#hatch)"/>
      <g fill="none" stroke="#0a7a18">
        <path d="M243.500 168v245M304.500 168v245M231 170.500h135M231 224.500h135M231 273.500h135M231 412.500h135M325.500 168v57M296 216l17 17M296 265l17 17M296 404l17 17M318 219l16 14"/>
        <circle cx="244" cy="225" r="12.500"/><circle cx="244" cy="273.500" r="12.500"/><circle cx="244" cy="412.500" r="12.500"/>
      </g>
      <!-- beams -->
      <path d="M366 168v52M378 225h100M501 168v40M636 168v40M1175.500 168v52M1310.500 168v52M1184 225h181" stroke="#18e008" stroke-width="8"/>
      <path d="M771 168v40M1040.500 168v110M890 274h152M1049 225h118" stroke="#f7ea00" stroke-width="8"/>
      <path d="M370 170h74M442.500 168v53" stroke="#f7ea00" stroke-width="3"/>
      <path d="M336 256h142" stroke="#f3ec50" stroke-width="2"/>
      <!-- slab outlines -->
      <path d="M313 168v110h165M313 278l52-53h113M366 168v57" fill="none" stroke="#fff" stroke-width="2"/>
      <path d="M1364 278h-242v-52h242M1122 278l53-53M1126 238h32M1130 235l-4 3 4 3M1305 268l5 5 5-5" fill="none" stroke="#fff" stroke-width="2"/>
      <path d="M1309.500 230v42" stroke="#fff" stroke-dasharray="6 2"/>
      <path d="M348 168v78M348 243h130M1122 247h31l6-4h206M1153 225v25M1364 225v53" fill="none" stroke="#f010e8" stroke-width="2"/>
      <path d="M362 217h16v12h-16zM1032 213h17v16h-17zM1167 217h17v12h-17zM1302 217h17v12h-17z" fill="#7a00f0"/>
      <!-- axes -->
      <path d="M365.500 168v245M1040.500 168v245M1175.500 168v245M1310.500 168v245M366 412.500h999M366 224.500h999M366 273.500h999" stroke="#d01818"/>
      <path d="M441.500 168v245M684.500 168v40M710.500 168v40M1101.500 168v245M501.500 168v40M636.500 168v40M771.500 168v40M366 170.500h999" stroke="#8e1414"/>
      <g fill="none" stroke="#109018" stroke-dasharray="5 1">
        <circle cx="365.500" cy="181" r="12.500"/><circle cx="501" cy="181" r="12.500"/><circle cx="636" cy="181" r="12.500"/><circle cx="771" cy="181" r="12.500"/><circle cx="1040.500" cy="181" r="12.500"/><circle cx="1175.500" cy="181" r="12.500"/><circle cx="1310.500" cy="181" r="12.500"/>
      </g>
      <g class="axis-no"><text x="501" y="187">2</text><text x="636" y="187">3</text><text x="771" y="187">4</text><text x="1040" y="187">5</text><text x="1175" y="187">6</text><text x="1310" y="187">7</text></g>
      <g class="dim-text">
        <text x="244" y="230">B</text><text x="244" y="279">A</text><text x="244" y="418">A1</text>
        <text transform="translate(289 248) rotate(-90)">1200</text>
        <text transform="translate(289 342) rotate(-90)">3400</text>
        <text transform="translate(289 169) rotate(-90)">2600</text>
        <text transform="translate(330 196) rotate(-90)">1340</text>
      </g>
      <!-- origin marker -->
      <path d="M286 423v-38" stroke="#00f020" stroke-width="4"/><path d="M282 385l4-12 4 12z" fill="#00f020"/>
      <path d="M286 423h38" stroke="#f00" stroke-width="4"/><path d="M323 419l13 4-13 4z" fill="#f00"/>
      <path d="M295 377l5 5 5-5M300 382v4" fill="none" stroke="#0a9a18"/><path d="M323 402l9 10M332 402l-9 10" stroke="#d01818"/>
    </svg>

    <div class="status">
      <div class="toolbar">
        <i class="grip"></i>
        <button class="tool"><svg class="ico"><use href="#i-ortho"/></svg>正交</button>
        <button class="tool on"><svg class="ico"><use href="#i-snap"/></svg>对象捕捉</button>
        <button class="tool on"><svg class="ico"><use href="#i-dyn"/></svg>动态输入</button>
        <i class="grip"></i>
        <button class="tool"><svg class="ico"><use href="#i-cross"/></svg>交点</button>
      </div>
      <div class="toolbar coords">
        <label for="yval">Y=</label>
        <span class="spin"><input id="yval" value="0" disabled><i class="arrows"></i></span>
        <span class="unit">mm</span>
        <i class="sep"></i>
        <input type="checkbox" id="rot">
        <label for="rot" class="rot">旋转</label>
        <span class="spin wide"><input value="0.000" aria-label="角度" disabled><i class="arrows"></i></span>
        <span class="unit">°</span>
      </div>
    </div>

    <div class="bottom">
      <div class="dots"><svg width="10" height="10"><path d="M.5.500h9v9h-9zM2 2l6 6M8 2L2 8" fill="none" stroke="#433"/></svg></div>
      <div class="sheet">
        <div class="toolbar sheet-tools">
          <div class="steps">
            <button class="tool" aria-label="第一条" disabled><svg class="ico"><use href="#i-first"/></svg></button>
            <button class="tool" aria-label="上一条" disabled><svg class="ico"><use href="#i-prev"/></svg></button>
            <button class="tool" aria-label="下一条" disabled><svg class="ico"><use href="#i-next"/></svg></button>
            <button class="tool" aria-label="最后一条" disabled><svg class="ico"><use href="#i-last"/></svg></button>
            <i class="sep"></i>
            <button class="tool" aria-label="上移" disabled><svg class="ico"><use href="#i-up"/></svg></button>
            <button class="tool" aria-label="下移" disabled><svg class="ico"><use href="#i-down"/></svg></button>
            <i class="sep"></i>
            <button class="tool" disabled><svg class="ico"><use href="#i-ins"/></svg>插入</button>
            <button class="tool" disabled><svg class="ico"><use href="#i-del"/></svg>删除</button>
          </div>
          <span>总重(kg)：0</span>
        </div>
        <div class="table-wrap">
          <table>
            <colgroup><col class="c33"><col class="c72"><col class="c56"><col class="c36"><col class="c34"><col class="c200"><col class="c166"><col class="c156"><col class="c61"><col class="c38"><col class="c39"><col class="c49"><col class="c61"><col class="c61"><col class="c72"></colgroup>
            <tr><th></th><th>筋号</th><th class="hot">直径(mm)</th><th>级别</th><th>图号</th><th></th><th></th><th>公式描述</th><th>长度(mm)</th><th>根数</th><th>搭接</th><th>损耗(%)</th><th>单重(kg)</th><th>总重(kg)</th><th>钢筋归类</th></tr>
            <tr><td class="rowno">1*</td><td></td><td class="cell-on"></td><td></td><td></td><td></td><td></td><td></td><td></td><td></td><td></td><td></td><td></td><td></td><td></td></tr>
          </table>
        </div>
        <div class="hscroll">
          <svg width="16" height="16"><path d="M10 4L6 8l4 4" fill="none" stroke="#444" stroke-width="1.600"/></svg>
          <div class="track"><i class="thumb"></i></div>
          <svg width="16" height="16"><path d="M6 4l4 4-4 4" fill="none" stroke="#444" stroke-width="1.600"/></svg>
        </div>
      </div>
    </div>
  </section>
</div>

<!-- dialog -->
<form class="dialog">
  <div class="dlg-title">
    <svg class="ico"><use href="#i-app"/></svg>智能布置
    <button type="button" class="dlg-close" aria-label="关闭"><svg width="11" height="11"><path d="M.5.500l10 10M10.500.500l-10 10" stroke="#111" stroke-width="1.200"/></svg></button>
  </div>
  <div class="dlg-body">
    <fieldset class="mode">
      <legend>布置方式选择</legend>
      <label><input type="radio" name="mode">双向布置</label>
      <label><input type="radio" name="mode">双网双向布置</label>
      <label><input type="radio" name="mode" checked>XY向布置</label>
    </fieldset>
    <div class="dlg-right">
      <fieldset class="bars">
        <legend>底筋</legend>
        <div class="row"><label for="bx">X方向</label><span class="combo"><input id="bx" value="C12@200"><svg width="10" height="6"><path d="M1 1l4 4 4-4" fill="none" stroke="#666"/></svg></span></div>
        <div class="row"><label for="by">Y方向</label><span class="combo"><input id="by" value="C10/C8@200"><svg width="10" height="6"><path d="M1 1l4 4 4-4" fill="none" stroke="#666"/></svg></span></div>
      </fieldset>
      <fieldset class="bars">
        <legend>面筋</legend>
        <div class="row"><label for="tx">X方向</label><span class="combo"><input id="tx" value="C10/C8@200"><svg width="10" height="6"><path d="M1 1l4 4 4-4" fill="none" stroke="#666"/></svg></span></div>
        <div class="row"><label for="ty">Y方向</label><span class="combo focus"><input id="ty" value="C10/C8@200"><svg width="10" height="6"><path d="M1 1l4 4 4-4" fill="none" stroke="#666"/></svg></span></div>
      </fieldset>
      <div class="ref-row">
        <label><input type="checkbox" checked>选择参照轴网</label>
        <span class="grid-pick"><select aria-label="轴网"><option>轴网-1</option></select><svg width="10" height="6"><path d="M1 1l4 4 4-4" fill="none" stroke="#555"/></svg></span>
      </div>
      <div class="dlg-btns"><button type="button">确定</button><button type="button">取消</button></div>
    </div>
  </div>
</form>

<!-- input method bar -->
<div class="ime">
  <svg class="ime-logo" width="28" height="28" viewBox="0 0 28 28"><rect x="2" y="2" width="24" height="24" rx="5" fill="#f0501e" transform="rotate(-10 14 14)"/><path d="M21 8c-5-3-13-2-13 2 0 5 12 2 12 7 0 4-8 5-13 2" fill="none" stroke="#fff" stroke-width="3.500"/></svg>
  <b>英</b>
  <svg width="16" height="16"><path d="M10 2c4 3 4 10-2 12-3 1-6-1-7-3 6 2 10-3 9-9z" fill="#1b6ec2"/></svg>
  <svg width="16" height="16"><circle cx="4" cy="5" r="2" fill="#1b6ec2"/><path d="M9 9h3c0 3-1 4-3 5" fill="none" stroke="#1b6ec2" stroke-width="2"/></svg>
  <svg width="16" height="16"><rect x="5" y="0" width="6" height="10" rx="3" fill="#1b6ec2"/><path d="M2 7c0 7 12 7 12 0M8 12v3M5 15h6" fill="none" stroke="#1b6ec2" stroke-width="1.500"/></svg>
  <svg width="16" height="16"><rect x="1" y="3" width="14" height="10" rx="1" fill="none" stroke="#1b6ec2" stroke-width="1.600"/><path d="M3 6h10M3 8.500h10M5 11h6" stroke="#1b6ec2" stroke-width="1.300" stroke-dasharray="2 1"/></svg>
  <svg width="16" height="16"><circle cx="6" cy="4" r="3" fill="#aab6cc"/><path d="M1 14c0-8 10-8 10 0z" fill="#aab6cc"/><rect x="8" y="8" width="8" height="7" fill="#fff" stroke="#aab6cc"/><path d="M10 10v3M12 10h2l-2 3h2" fill="none" stroke="#8b9ab5"/></svg>
  <svg width="16" height="16"><path d="M5 1q3 2 6 0l5 3-2 4-2-1v8H4V7L2 8 0 4z" fill="#1b6ec2"/></svg>
  <svg width="16" height="16"><path d="M2 14l7-7" stroke="#1b6ec2" stroke-width="3"/><path d="M14 4l-3 2-2-2 2-3C7 0 6 4 8 7s7 2 7-2z" fill="#1b6ec2"/></svg>
</div>

<div class="score">67</div>

<div class="float-win">
  <div class="float-title"><span>Poi...</span><i></i></div>
  <button>开始</button>
</div>

</body>
</html>
```

FILE: styles.css
```css
* { box-sizing: border-box; }
html, body { height: 100%; }
body {
  margin: 0;
  display: flex;
  flex-direction: column;
  overflow: hidden;
  background: #f0f0f0;
  color: #000;
  font-family: "Open Sans", "Noto Sans CJK SC", sans-serif;
  font-size: 12px;
  line-height: 16px;
}
button, input, select { font: inherit; color: inherit; margin: 0; }
button { border: 0; background: none; padding: 0; white-space: nowrap; }
svg { display: block; flex: none; }
.sprite { position: absolute; }
.ico { width: 16px; height: 16px; }

/* title bar */
.titlebar {
  height: 24px;
  flex: none;
  display: flex;
  align-items: center;
  padding-left: 2px;
  background: #fff;
  color: #999;
  white-space: nowrap;
}
.title-text { margin-left: 5px; width: 761px; font-family: Inter, "Noto Sans CJK SC", sans-serif; }
.win-btns { margin-left: auto; display: flex; }
.win-btns button { width: 46px; height: 20px; display: flex; align-items: center; justify-content: center; }

/* menu */
.menubar { height: 28px; flex: none; display: flex; align-items: center; padding-left: 2px; }
.menus { display: flex; font-family: "Noto Sans CJK SC", sans-serif; }
.menus button { padding: 0 6px 0 5px; }
.news {
  width: 188px;
  align-self: stretch;
  display: flex;
  align-items: center;
  justify-content: center;
  background: #fafafa;
  margin-left: auto;
}
.news a { color: #0b6b70; text-decoration: none; font-family: "Liberation Serif", "Noto Sans CJK SC", serif; }
.account { width: 239px; align-self: stretch; display: flex; align-items: center; background: #f7f7f7; }
.account span { margin-left: 6px; white-space: nowrap; }
.bell { margin-left: 9px; }

/* toolbars */
.toolbar {
  height: 28px;
  flex: none;
  align-self: flex-start;
  display: flex;
  align-items: center;
  white-space: nowrap;
  background: linear-gradient(#fcfcfc, #f1f1f1);
}
.toolbar.full { align-self: stretch; padding-right: 24px; }
.tool {
  height: 24px;
  display: flex;
  align-items: center;
  gap: 3px;
  padding: 0 3px;
  border: 1px solid transparent;
  flex: none;
}
.tool.on { background: #dcebf8; border-color: #0a78d4; }
.tool:disabled { color: #999; }
.caret { width: 5px; height: 8px; display: flex; align-items: center; }
.caret.wide { width: 9px; padding-left: 3px; }
.caret::before { content: ""; border: 3px solid transparent; border-top-color: currentColor; border-bottom: 0; }
.sep { width: 1px; height: 16px; margin: 0 3px 0 2px; background: #bbb; flex: none; }
.grip { height: 16px; margin: 0 1px 0 5px; border-left: 2px dotted #b4b4b4; flex: none; }
.more { align-self: flex-start; margin-left: auto; padding: 0 6px; font-size: 14px; font-weight: bold; line-height: 16px; }
.topbar { height: 32px; flex: none; display: flex; align-items: stretch; }
.topbar .toolbar { height: 32px; }
.file-tools { width: 154px; }
.calc-tools { width: 550px; }
.view-tools { flex: 1 1 0; min-width: 0; overflow: hidden; }
.pick {
  appearance: none;
  width: 72px;
  height: 22px;
  padding: 0 12px 0 4px;
  border: 0;
  border-radius: 0;
  background-color: #fcfcfc;
  background-image: linear-gradient(to bottom left, #111 55%, transparent 55%), linear-gradient(to bottom right, #111 55%, transparent 55%);
  background-size: 3px 3px;
  background-repeat: no-repeat;
  background-position: right 7px center, right 4px center;
}
.pick.short { width: 60px; }
.pick.boxed { width: 56px; height: 24px; border: 1px solid #888; background-color: #f4f4f4; margin-right: 1px; }

.main { flex: 1; min-height: 0; display: flex; gap: 5px; }

/* left navigator */
.nav {
  width: 226px;
  flex: none;
  display: flex;
  flex-direction: column;
  overflow: hidden;
  font-family: "Liberation Serif", "Noto Sans CJK SC", serif;
}
.nav-head {
  height: 15px;
  flex: none;
  display: flex;
  align-items: center;
  justify-content: space-between;
  font-size: 13px;
  border: 1px solid #888;
  border-left: 0;
  margin-bottom: 2px;
}
.nav-head-btns { display: flex; align-items: center; gap: 9px; padding-right: 3px; }
.nav-tab { height: 22px; flex: none; border: 1px solid #aaa; border-bottom: 0; border-left-color: #fff; }
.nav-tab:last-child { margin-bottom: -7px; }
.nav-tools { height: 28px; flex: none; display: flex; align-items: center; gap: 7px; padding-left: 7px; border-top: 1px solid #999; background: #f8f8f8; }
.tree-box { flex: 1 1 0; min-height: 0; display: flex; margin: 0 1px 0 2px; border: 1px solid #888; background: #fff; }
.tree { flex: 1; overflow: hidden; }
.tree ul {
  list-style: none;
  margin: 0;
  padding: 0;
  background:
    repeating-linear-gradient(#999 0 1px, transparent 1px 2px) 12px 0 / 1px 100% no-repeat,
    repeating-linear-gradient(#999 0 1px, transparent 1px 2px) 31px 0 / 1px calc(100% - 8px) no-repeat;
}
.tree li, .group { height: 16px; display: flex; align-items: center; gap: 4px; white-space: nowrap; }
.tree li { padding-left: 32px; }
.tree li::before { content: ""; width: 8px; margin-right: -2px; border-top: 1px dotted #999; }
.group { padding-left: 5px; }
.chev { width: 12px; height: 12px; margin-right: 2px; }
.on > span { background: #d8d8d8; padding: 0 4px; margin-left: -4px; }
.tight { margin-left: -3px; }
.new { font: bold 9px/10px "Open Sans", sans-serif; background: #ffe640; align-self: flex-start; margin-left: -3px; }
.vscroll { width: 16px; background: #f0f0f0; display: flex; flex-direction: column; align-items: center; justify-content: space-between; }
.vscroll .thumb { width: 14px; height: 63%; margin-top: 104px; background: #cdcdcd; }

/* workspace */
.work { flex: 1; min-width: 0; display: flex; flex-direction: column; }
.canvas { flex: 1 1 0; min-height: 0; width: 100%; }
.dim-text text { fill: #d8d8d8; font: 15px Roboto, sans-serif; text-anchor: middle; }
.axis-no text { fill: #8a6f9c; font: 15px Roboto, sans-serif; text-anchor: middle; }

.status { height: 32px; flex: none; display: grid; grid-template-columns: 655px 1fr; align-items: end; }
.status .toolbar { height: 30px; justify-self: start; align-self: end; overflow: hidden; }
.coords { color: #777; padding-right: 6px; font-size: 13px; }
.coords input[type=checkbox] { appearance: none; width: 11px; height: 11px; border: 1px solid #999; background: #fff; }
.rot { color: #000; font-size: 12px; margin: 0 4px 0 8px; }
.spin { display: flex; align-items: center; width: 58px; height: 23px; margin-left: 3px; padding-right: 4px; border: 1px solid #777; background: #f8f8f8; }
.spin.wide { width: 68px; margin-left: 0; }
.spin input { flex: 1; min-width: 0; border: 0; background: none; padding: 0 12px 0 0; text-align: right; font-size: 12px; color: #888; }
.arrows { display: flex; flex-direction: column; gap: 9px; }
.arrows::before, .arrows::after { content: ""; border: 3px solid transparent; }
.arrows::before { border-top: 0; border-bottom-color: #555; }
.arrows::after { border-bottom: 0; border-top-color: #555; }
.unit { margin: 0 1px; }

.bottom { height: 192px; flex: none; display: flex; gap: 2px; }
.dots { width: 11px; padding: 2px 0 0 1px; background: radial-gradient(circle, #bbb 1px, transparent 1px) 2px 0 / 4px 5px; }
.sheet { flex: 1; min-width: 0; display: flex; flex-direction: column; padding-top: 2px; }
.sheet-tools { height: 26px; align-self: stretch; display: grid; grid-template-columns: 642px 1fr; }
.steps { display: flex; align-items: center; overflow: hidden; }
.table-wrap { flex: 1; overflow: hidden; background: #fff; border: 1px solid #999; border-bottom: 0; }
table { border-collapse: collapse; table-layout: fixed; width: 1134px; font-family: "Liberation Serif", "Noto Sans CJK SC", serif; }
th, td { height: 19px; padding: 0; border: 1px solid #b4b4b4; border-top: 0; border-left: 0; font-weight: normal; text-align: center; white-space: nowrap; overflow: hidden; }
th { background: linear-gradient(#fff, #efefef); }
.hot { background: #f9cc82; color: #700018; }
.rowno { background: #fcd590; color: #700018; }
.cell-on { background: #d6e8f8; border-left: 1px solid #000; }
.c33 { width: 33px; } .c72 { width: 72px; } .c56 { width: 56px; } .c36 { width: 36px; } .c34 { width: 34px; }
.c200 { width: 200px; } .c166 { width: 166px; } .c156 { width: 156px; } .c61 { width: 61px; }
.c38 { width: 38px; } .c39 { width: 39px; } .c49 { width: 49px; }
.hscroll { height: 9px; flex: none; overflow: hidden; display: flex; background: #f0f0f0; }
.track { flex: 1; display: flex; }
.track .thumb { width: 66%; height: 16px; background: #cdcdcd; }

/* dialog */
.dialog {
  position: absolute;
  left: 477px;
  top: 198px;
  width: 413px;
  height: 371px;
  background: #f0f0f0;
  border: 1px solid #2f86d8;
  box-shadow: 2px 5px 14px rgba(0, 0, 0, .35);
  font-family: "Liberation Serif", "Noto Sans CJK SC", serif;
}
.dlg-title { height: 25px; display: flex; align-items: center; gap: 5px; padding: 0 10px 0 3px; background: #fff; }
.dlg-close { margin-left: auto; }
.dlg-body { display: flex; gap: 5px; padding: 14px 19px 0 13px; }
.dialog fieldset { margin: 0; border: 1px solid #dcdcdc; min-width: 0; }
legend { padding: 0 1px; height: 16px; }
.mode { width: 121px; height: 282px; padding: 0 0 0 6px; display: flex; flex-direction: column; }
.mode label { display: flex; align-items: center; gap: 2px; height: 16px; margin: 35px 0 37px; }
.dialog input[type=radio] { appearance: none; width: 14px; height: 14px; border: 1px solid #333; border-radius: 50%; background: #fff; }
.dialog input[type=radio]:checked { background: radial-gradient(circle, #333 3px, #fff 4px); }
.dlg-right { flex: 1; padding-top: 16px; }
.dialog .bars { height: 81px; margin: 0 4px 33px 1px; padding: 4px 11px 0 6px; }
.bars .row { display: flex; align-items: center; gap: 9px; margin-bottom: 8px; padding-left: 9px; }
.row label { width: 31px; white-space: nowrap; }
.combo { flex: 1; height: 20px; display: flex; align-items: center; padding: 0 4px 0 2px; border: 1px solid #707070; background: #fff; }
.combo input { flex: 1; min-width: 0; border: 0; outline: 0; padding: 0; background: none; font: 10px/16px "Liberation Mono", monospace; }
.combo.focus { border-color: #0a6cc8; }
.ref-row { display: flex; align-items: center; justify-content: space-between; margin-top: 44px; }
.ref-row label { display: flex; align-items: center; gap: 3px; }
.ref-row input { appearance: none; width: 13px; height: 13px; border: 1px solid #333; background: #fff; display: grid; place-content: center; }
.ref-row input::before { content: ""; width: 9px; height: 4px; margin-top: -3px; border: solid #222; border-width: 0 0 1px 1px; transform: rotate(-45deg); }
.grid-pick { width: 144px; height: 20px; display: flex; align-items: center; padding-right: 4px; border: 1px solid #acacac; background: #e1e1e1; }
.grid-pick select { appearance: none; flex: 1; border: 0; background: none; padding: 0 3px; }
.dlg-btns { display: flex; justify-content: flex-end; gap: 21px; margin: 18px 1px 0 0; }
.dlg-btns button { width: 78px; height: 28px; border: 1px solid #acacac; background: #e1e1e1; }
.dlg-btns button:first-child { width: 72px; }

/* floating windows of other programs */
.ime {
  position: absolute;
  left: 590px;
  top: 3px;
  width: 196px;
  height: 24px;
  display: flex;
  align-items: center;
  gap: 6px;
  background: #fff;
  border: 1px solid #c4c8d4;
  color: #1b6ec2;
}
.ime-logo { margin-left: -12px; }
.ime b { font-size: 14px; }
.score {
  position: absolute;
  left: 932px;
  top: -27px;
  width: 46px;
  height: 46px;
  padding-top: 24px;
  border: 2px solid #e4efe6;
  border-radius: 50%;
  background: #32b94e;
  box-shadow: 0 1px 5px #777;
  color: #fff;
  font-weight: bold;
  text-align: center;
}
.float-win { position: absolute; left: 1291px; top: 45px; width: 52px; background: #fff; box-shadow: 1px 2px 5px #777; }
.float-title { height: 25px; display: flex; justify-content: space-between; padding: 3px 0 0 3px; color: #999; }
.float-title i { width: 18px; height: 18px; background: #e4e4e4; }
.float-win button { display: block; width: 100%; height: 22px; border: 1px solid #666; border-width: 1px 2px 2px 1px; background: #f0f0f0; }
```
